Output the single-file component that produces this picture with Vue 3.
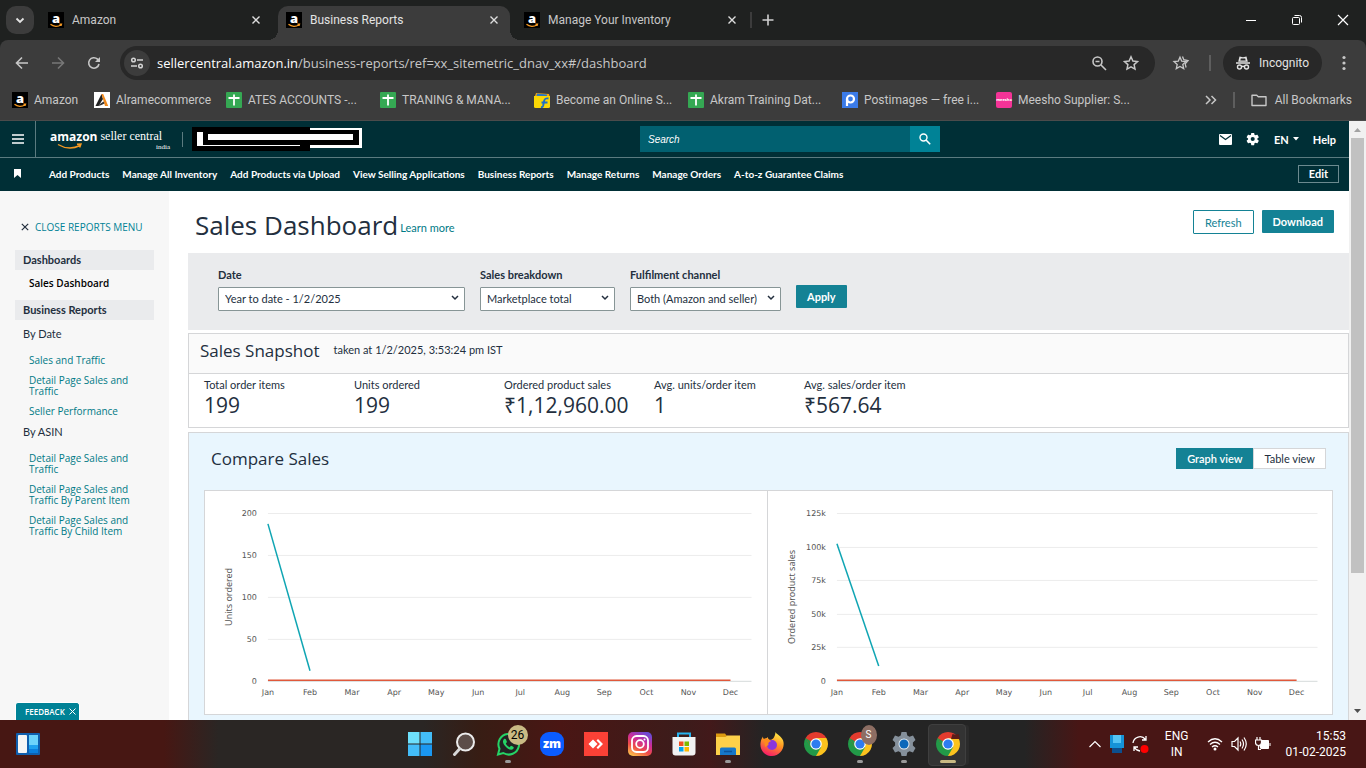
<template>
  <div class="screen">
    <svg class="defs" aria-hidden="true">
      <symbol id="sheet" viewBox="0 0 16 16">
        <rect width="16" height="16" rx="1" fill="#35a853" />
        <path d="M8 2.500v11M2.500 6h11" stroke="#fff" stroke-width="1.800" />
      </symbol>
      <symbol id="arame" viewBox="0 0 16 16">
        <rect width="16" height="16" fill="#fff" />
        <path d="M7.500 2 1.500 14h3L9 7z" fill="#222" />
        <path d="M7.500 2h1.700l5 12h-3.200z" fill="#f28a1c" />
        <path d="M4.500 13l5-3.500 1 2-3 1.500-3 1z" fill="#333" />
      </symbol>
      <symbol id="flipkart" viewBox="0 0 16 16">
        <path d="M0 4h16v10.500a1.500 1.500 0 0 1-1.500 1.500h-13A1.500 1.500 0 0 1 0 14.500z" fill="#fbd705" />
        <path d="M1 4l1-3 13 1 .5 2z" fill="#f5a70b" />
        <path d="M3 1.500l10 1v1.500H2.500z" fill="#2b78c4" />
        <path d="M14.500 6.500c-3-.5-4 .3-4.500 3l-.8 4c-.3 1.300-.8 1.800-2.200 1.600M7.500 10.500h6" fill="none" stroke="#1e6fc7" stroke-width="1.900" />
      </symbol>
      <symbol id="postimg" viewBox="0 0 16 16">
        <rect width="16" height="16" fill="#3b7be8" />
        <circle cx="8.500" cy="7" r="3.500" fill="none" stroke="#fff" stroke-width="2.200" />
        <path d="M5 7v7" stroke="#fff" stroke-width="2.200" />
      </symbol>
      <symbol id="chrome" viewBox="0 0 24 24">
        <path d="M12 12 1.610 6A12 12 0 0 1 22.390 6z" fill="#e33b2e" />
        <path d="M12 12 22.390 6A12 12 0 0 1 12 24z" fill="#fcc31e" />
        <path d="M12 12v12A12 12 0 0 1 1.610 6z" fill="#229a48" />
        <path d="M12 6h10.390L17.200 15z" fill="#fcc31e" />
        <path d="M17.200 15 12 24 6.800 15z" fill="#229a48" />
        <path d="M6.800 15 1.610 6H12z" fill="#e33b2e" />
        <path d="M1.610 6 6.800 15 8 10z" fill="#229a48" />
        <circle cx="12" cy="12" r="5.800" fill="#fff" />
        <circle cx="12" cy="12" r="4.600" fill="#2d7cf0" />
      </symbol>
      <symbol id="smile" viewBox="0 0 16 5">
        <path d="M2.500 1.300c3 2.600 7.500 2.700 10.500.4M11.500 1.200l2-.1-.5 1.800" fill="none" stroke="#f59a23" stroke-width="1.300" />
      </symbol>
    </svg>

    <header class="browser">
      <div class="tab-strip">
        <button class="tab-search" aria-label="Search tabs">
          <svg width="12" height="12" viewBox="0 0 12 12"><path d="M2.500 4.500 6 8l3.500-3.500" fill="none" stroke="#e3e3e3" stroke-width="1.800" /></svg>
        </button>
        <div v-for="tab in tabs" :key="tab.title" class="tab" :class="{ active: tab.active }">
          <span class="fav amazon">a<svg width="16" height="5"><use href="#smile" /></svg></span>
          <span class="tab-title">{{ tab.title }}</span>
          <button class="tab-close" :aria-label="'Close ' + tab.title">
            <svg width="10" height="10" viewBox="0 0 10 10"><path d="M1.500 1.500l7 7M8.500 1.500l-7 7" stroke="#dedede" stroke-width="1.400" /></svg>
          </button>
        </div>
        <span class="tab-line"></span>
        <button class="new-tab" aria-label="New tab">
          <svg width="12" height="12" viewBox="0 0 12 12"><path d="M6 .5v11M.5 6h11" stroke="#d0d0d0" stroke-width="1.600" /></svg>
        </button>
        <div class="window-buttons">
          <button aria-label="Minimize"><svg width="12" height="12" viewBox="0 0 12 12"><path d="M1 6.500h10" stroke="#fff" /></svg></button>
          <button aria-label="Restore"><svg width="12" height="12" viewBox="0 0 12 12" fill="none" stroke="#fff"><rect x="1.500" y="3.500" width="7" height="7" rx="1" /><path d="M3.500 1.500h5a2 2 0 0 1 2 2v5" /></svg></button>
          <button aria-label="Close"><svg width="12" height="12" viewBox="0 0 12 12"><path d="M1 1l10 10M11 1 1 11" stroke="#fff" stroke-width="1.200" /></svg></button>
        </div>
      </div>

      <div class="toolbar">
        <button class="tool" aria-label="Back"><svg width="14" height="14" viewBox="0 0 14 14"><path d="M13 7H2M7 1.500 1.500 7 7 12.500" fill="none" stroke="#c7c7c7" stroke-width="1.600" /></svg></button>
        <button class="tool" aria-label="Forward"><svg width="14" height="14" viewBox="0 0 14 14"><path d="M1 7h11M7 1.500 12.500 7 7 12.500" fill="none" stroke="#777" stroke-width="1.600" /></svg></button>
        <button class="tool" aria-label="Reload"><svg width="14" height="14" viewBox="0 0 14 14"><path d="M12 8a5.200 5.200 0 1 1-1.500-4.800L12.500 5" fill="none" stroke="#c7c7c7" stroke-width="1.600" /><path d="M13 1v5H8z" fill="#c7c7c7" /></svg></button>
        <div class="address">
          <span class="site-info">
            <svg width="14" height="14" viewBox="0 0 14 14" fill="none" stroke="#d4d4d4" stroke-width="1.500"><circle cx="3.500" cy="4" r="1.800" /><path d="M7 4h6M1 10h6" /><circle cx="10.500" cy="10" r="1.800" /></svg>
          </span>
          <span class="url"><b>sellercentral.amazon.in</b>/business-reports/ref=xx_sitemetric_dnav_xx#/dashboard</span>
          <svg width="16" height="16" viewBox="0 0 16 16" fill="none" stroke="#c7c7c7" stroke-width="1.600"><circle cx="6.500" cy="6.500" r="4.500" /><path d="M10 10l5 5M4.500 6.500h4" /></svg>
          <svg width="16" height="16" viewBox="0 0 16 16" fill="none" stroke="#c7c7c7" stroke-width="1.500"><path d="M8 1.800l1.900 4.200 4.600.5-3.400 3.100.9 4.500L8 11.800l-4 2.300.9-4.500L1.500 6.500 6.100 6z" /></svg>
        </div>
        <svg class="star" width="18" height="16" viewBox="0 0 18 16" fill="none" stroke="#c7c7c7" stroke-width="1.300"><path d="M8 2.200l1.700 3.900 4.300.4-3.200 2.900.9 4.200L8 11.400l-3.700 2.200.9-4.200L2 6.500l4.300-.4z" /><path d="M10.500 1.500l1.300 3.200 4.200.9-2.800 3.200.9 3.700" /></svg>
        <span class="tool-line"></span>
        <div class="incognito">
          <svg width="16" height="16" viewBox="0 0 16 16"><path d="M4.500 1.500 8 2.200l3.500-.7 1.300 5.300H3.200z" fill="#e3e3e3" /><path d="M5.800 3.500h4.400l.5 2H5.300z" fill="#282828" /><path d="M1 8h14" stroke="#e3e3e3" stroke-width="1.500" /><g fill="none" stroke="#e3e3e3" stroke-width="1.400"><circle cx="4.500" cy="12" r="2" /><circle cx="11.500" cy="12" r="2" /><path d="M6.500 11.600q1.500-.8 3 0" /></g></svg>
          <span>Incognito</span>
        </div>
        <button class="tool dots" aria-label="Menu"><svg width="4" height="16" viewBox="0 0 4 16" fill="#c7c7c7"><circle cx="2" cy="2.500" r="1.600" /><circle cx="2" cy="8" r="1.600" /><circle cx="2" cy="13.500" r="1.600" /></svg></button>
      </div>

      <div class="bookmarks">
        <a v-for="mark in bookmarks" :key="mark.text" href="#" class="mark" :class="mark.size">
          <span v-if="mark.icon === 'amazon'" class="fav amazon">a<svg width="16" height="5"><use href="#smile" /></svg></span>
          <span v-else-if="mark.icon === 'meesho'" class="fav meesho">meesho</span>
          <svg v-else width="16" height="16"><use :href="'#' + mark.icon" /></svg>
          <span>{{ mark.text }}</span>
        </a>
        <svg class="more" width="12" height="10" viewBox="0 0 12 10"><path d="M1 1l4 4-4 4M6.500 1l4 4-4 4" fill="none" stroke="#c7c7c7" stroke-width="1.500" /></svg>
        <span class="mark-line"></span>
        <svg width="16" height="14" viewBox="0 0 16 14"><path d="M1 2.200h4.700l1.600 1.600H15v8.700H1z" fill="none" stroke="#c7c7c7" stroke-width="1.400" stroke-linejoin="round" /></svg>
        <a href="#" class="all-marks">All Bookmarks</a>
      </div>
    </header>

    <div class="viewport">
      <div class="page">
        <div class="topbar">
          <button class="burger" aria-label="Menu"><svg width="12" height="10" viewBox="0 0 12 10"><path d="M0 1h12M0 5h12M0 9h12" stroke="#fff" stroke-width="1.400" /></svg></button>
          <a href="#" class="logo">
            <span class="logo-amazon">amazon
              <svg width="26" height="7" viewBox="0 0 26 7"><path d="M1 1.500q11 6.500 22 1M20 1.300l4-.3-1.300 3.400" fill="none" stroke="#f59a23" stroke-width="1.400" /></svg>
            </span>
            <span class="logo-seller">seller central<small>india</small></span>
          </a>
          <span class="top-line"></span>
          <svg class="account" width="170" height="24" viewBox="0 0 170 24">
            <path d="M0 0h118v24H0z" fill="#000" />
            <path d="M118 1h52v20h-52z" fill="#fff" />
            <path d="M5 5h7v14H5z" fill="#fff" />
            <path d="M11 3h156v15H11z" fill="#000" />
            <path d="M16 7h145v6H16zM11 18h97v1H11z" fill="#fff" />
          </svg>
          <form class="search" @submit.prevent>
            <input type="text" v-model="query" placeholder="Search" aria-label="Search" />
            <button aria-label="Search"><svg width="12" height="12" viewBox="0 0 12 12"><circle cx="4.500" cy="4.500" r="3.500" fill="none" stroke="#fff" stroke-width="1.400" /><path d="M7 7l4.200 4.200" stroke="#fff" stroke-width="1.600" /></svg></button>
          </form>
          <div class="top-links">
            <svg width="13" height="11" viewBox="0 0 13 11"><rect width="13" height="11" rx="1" fill="#fff" /><path d="M1 1.500l5.500 4 5.500-4" fill="none" stroke="#002f36" stroke-width="1.200" /></svg>
            <svg width="14" height="14" viewBox="0 0 24 24"><path fill="#fff" d="M19.400 13c0-.3.100-.6.100-1s0-.7-.1-1l2.300-1.700c.2-.2.300-.5.100-.7l-2.200-3.800c-.1-.2-.4-.3-.7-.2l-2.600 1.100c-.6-.4-1.200-.8-1.800-1L14.100 2c0-.3-.3-.5-.5-.5H9.400c-.3 0-.5.200-.5.500l-.4 2.700c-.6.300-1.200.6-1.800 1L4.100 4.600c-.3-.1-.6 0-.7.200L1.200 8.600c-.1.200-.1.500.1.700L3.600 11c0 .3-.1.700-.1 1s0 .7.100 1l-2.300 1.700c-.2.200-.3.500-.1.700l2.200 3.800c.1.200.4.300.7.200l2.600-1.100c.6.400 1.200.8 1.800 1l.4 2.700c0 .3.200.5.500.5h4.200c.3 0 .5-.2.500-.5l.4-2.700c.6-.3 1.200-.6 1.800-1l2.600 1.100c.3.100.6 0 .7-.2l2.200-3.800c.1-.2.100-.5-.1-.7zM11.500 15.500a3.500 3.500 0 1 1 0-7 3.500 3.500 0 0 1 0 7z" /></svg>
            <button class="lang">EN <svg width="6" height="4" viewBox="0 0 6 4"><path d="M0 0h6L3 3.500z" fill="#fff" /></svg></button>
            <a href="#">Help</a>
          </div>
        </div>

        <nav class="nav">
          <svg class="flag" width="7" height="9" viewBox="0 0 7 9"><path d="M0 0h7v9L3.500 6 0 9z" fill="#fff" /></svg>
          <a v-for="item in navItems" :key="item" href="#">{{ item }}</a>
          <button class="edit">Edit</button>
        </nav>

        <div class="body">
          <aside class="sidebar">
            <button class="close-menu">
              <svg width="8" height="8" viewBox="0 0 8 8"><path d="M.8.8l6.400 6.400M7.200.8.8 7.200" stroke="#232f3e" stroke-width="1.200" /></svg>
              CLOSE REPORTS MENU
            </button>
            <h4 class="group">Dashboards</h4>
            <a href="#" class="current">Sales Dashboard</a>
            <h4 class="group">Business Reports</h4>
            <div v-for="section in reports" :key="section.title">
              <h5 class="sub">{{ section.title }}</h5>
              <ul class="links">
                <li v-for="link in section.links" :key="link"><a href="#">{{ link }}</a></li>
              </ul>
            </div>
          </aside>

          <main class="main">
            <div class="title-row">
              <h1>Sales Dashboard</h1>
              <a href="#" class="learn">Learn more</a>
              <button class="btn outline">Refresh</button>
              <button class="btn download">Download</button>
            </div>

            <div class="filters">
              <div v-for="filter in filters" :key="filter.id" class="field" :class="filter.id">
                <label :for="filter.id">{{ filter.label }}</label>
                <div class="select">
                  <select :id="filter.id" v-model="filter.value">
                    <option>{{ filter.value }}</option>
                  </select>
                  <svg width="8" height="6" viewBox="0 0 8 6"><path d="M1 1l3 3 3-3" fill="none" stroke="#232f3e" stroke-width="1.500" /></svg>
                </div>
              </div>
              <button class="btn apply">Apply</button>
            </div>

            <section class="snapshot">
              <div class="snapshot-head">
                <h2>Sales Snapshot</h2>
                <span>taken at 1/2/2025, 3:53:24 pm IST</span>
              </div>
              <div class="stats">
                <div v-for="stat in stats" :key="stat.label" class="stat">
                  <div class="stat-label">{{ stat.label }}</div>
                  <div class="stat-value">{{ stat.value }}</div>
                </div>
              </div>
            </section>

            <section class="compare">
              <div class="compare-head">
                <h2>Compare Sales</h2>
                <button class="view" :class="{ on: view === 'graph' }" @click="view = 'graph'">Graph view</button>
                <button class="view" :class="{ on: view === 'table' }" @click="view = 'table'">Table view</button>
              </div>
              <div class="charts">
                <div v-for="chart in charts" :key="chart.label" class="chart" :style="{ flexGrow: chart.width }">
                  <svg :viewBox="`0 0 ${chart.width} 223`">
                    <g v-for="(tick, i) in chart.ticks" :key="tick">
                      <line :x1="chart.left" :x2="chart.right" :y1="tickY(chart, i)" :y2="tickY(chart, i)" :stroke="i === chart.ticks.length - 1 ? '#d5dbdb' : '#ececec'" />
                      <text :x="chart.left - 11" :y="tickY(chart, i) + 3" text-anchor="end">{{ tick }}</text>
                    </g>
                    <text v-for="(month, i) in months" :key="month" :x="monthX(chart, i)" y="204" text-anchor="middle">{{ month }}</text>
                    <text class="axis" :transform="`translate(${chart.labelX} 106) rotate(-90)`" text-anchor="middle">{{ chart.label }}</text>
                    <line :x1="chart.left" :x2="monthX(chart, 11)" y1="189.500" y2="189.500" stroke="#e0583b" stroke-width="1.500" />
                    <line :x1="monthX(chart, 0)" :y1="valueY(chart, 0)" :x2="monthX(chart, 1)" :y2="valueY(chart, 1)" stroke="#0fa5b3" stroke-width="1.500" />
                  </svg>
                </div>
              </div>
            </section>
          </main>
        </div>
        <button class="feedback">FEEDBACK <svg width="7" height="7" viewBox="0 0 7 7"><path d="M.5.5l6 6M6.500.5l-6 6" stroke="#fff" /></svg></button>
      </div>

      <div class="scrollbar">
        <svg width="7" height="4" viewBox="0 0 7 4"><path d="M0 4h7L3.500 0z" fill="#a3a3a3" /></svg>
        <div class="track"><div class="thumb"></div></div>
        <svg width="7" height="4" viewBox="0 0 7 4"><path d="M0 0h7L3.500 4z" fill="#505050" /></svg>
      </div>
    </div>

    <footer class="taskbar">
      <div class="task-left">
        <svg width="24" height="24" viewBox="0 0 24 24"><rect y="1" width="24" height="22" rx="1" fill="#0f5fae" /><rect x="2" y="3" width="9" height="18" rx="1" fill="#f5f5f5" /><path d="M13 3h9v10h-9z" fill="#6cd3fb" /><path d="M13 13h9v4h-9z" fill="#1ea1ef" /><path d="M13 17h9v4h-9z" fill="#0a7fdd" /></svg>
      </div>
      <div class="task-apps">
        <button class="app" aria-label="Start">
          <svg width="24" height="24" viewBox="0 0 24 24"><path d="M0 0h11.500v11.500H0z" fill="#6ee0fb" /><path d="M12.500 0H24v11.500H12.500zM0 12.500h11.500V24H0z" fill="#43bdf8" /><path d="M12.500 12.500H24V24H12.500z" fill="#1a98f2" /></svg>
        </button>
        <button class="app" aria-label="Search">
          <svg width="24" height="24" viewBox="0 0 24 24"><circle cx="13.500" cy="10" r="8.500" fill="#5c4d48" stroke="#ececec" stroke-width="2" /><path d="M7.500 17l-5 5.500" stroke="#d8d8d8" stroke-width="3" stroke-linecap="round" /></svg>
        </button>
        <button class="app" aria-label="WhatsApp">
          <svg width="24" height="24" viewBox="0 0 24 24"><path d="M2 22.500l1.500-5.700A10.300 10.300 0 1 1 7.300 21z" fill="#222" stroke="#25d366" stroke-width="2" /><path d="M8 7c-2 2-1 5 2 8s6 3.500 7.500 1.500c.7-1 .2-1.500-2.500-2.700l-1.500 1.500c-1.500-.6-2.900-2-3.700-3.700L11 10C10 7 9.500 6 8 7z" fill="#25d366" /></svg>
          <span class="count">26</span><i></i>
        </button>
        <button class="app" aria-label="Zoom">
          <svg width="24" height="24" viewBox="0 0 24 24"><rect width="24" height="24" rx="9" fill="#0b5cff" /><text x="12" y="16" text-anchor="middle" font-family="Open Sans, sans-serif" font-weight="800" font-size="12" fill="#fff">zm</text></svg>
        </button>
        <button class="app" aria-label="AnyDesk">
          <svg width="24" height="24" viewBox="0 0 24 24"><rect width="24" height="24" fill="#fb4136" /><path d="M9 7.500 13.500 12 9 16.500 4.500 12z" fill="#fff" /><path d="M12.500 8.500l1.500-1.500 5 5-5 5-1.500-1.500L16 12z" fill="#fff" /></svg>
        </button>
        <button class="app" aria-label="Instagram">
          <svg width="24" height="24" viewBox="0 0 24 24">
            <defs><linearGradient id="insta" x1="0.200" y1="1" x2="0.700" y2="0"><stop offset="0" stop-color="#fdc04b" /><stop offset="0.350" stop-color="#ee4a48" /><stop offset="0.650" stop-color="#cb2c9c" /><stop offset="1" stop-color="#6a4bd6" /></linearGradient></defs>
            <rect width="24" height="24" rx="5" fill="url(#insta)" /><g fill="none" stroke="#fff" stroke-width="1.800"><rect x="4" y="4" width="16" height="16" rx="4.500" /><circle cx="12" cy="12" r="3.800" /></g><circle cx="16.500" cy="7.500" r="1" fill="#fff" />
          </svg>
        </button>
        <button class="app" aria-label="Store">
          <svg width="24" height="24" viewBox="0 0 24 24"><path d="M6 6V1.500h12V6" fill="none" stroke="#27b3ef" stroke-width="2" /><path d="M.5 5h23v15.500a3 3 0 0 1-3 3h-17a3 3 0 0 1-3-3z" fill="#f2f2f2" /><path d="M7 9.500h4.500V14H7z" fill="#f25022" /><path d="M12.500 9.500H17V14h-4.500z" fill="#7fba00" /><path d="M7 15h4.500v4.500H7z" fill="#00a4ef" /><path d="M12.500 15H17v4.500h-4.500z" fill="#ffb900" /></svg>
        </button>
        <button class="app" aria-label="Files">
          <svg width="24" height="24" viewBox="0 0 24 24"><path d="M0 1.500h9l2 2.500-2 3H0z" fill="#dd9a10" /><path d="M0 5h9.500L11 3.500h13V23H0z" fill="#fdd04a" /><path d="M4 23v-6a1.500 1.500 0 0 1 1.500-1.500h13A1.500 1.500 0 0 1 20 17v6z" fill="#1677c9" /><path d="M8 19.500h8" stroke="#0c539b" stroke-width="1.500" /></svg><i></i>
        </button>
        <button class="app" aria-label="Firefox">
          <svg width="24" height="24" viewBox="0 0 24 24">
            <defs><linearGradient id="fox" x1="0.700" y1="0" x2="0.300" y2="1"><stop offset="0" stop-color="#fff04a" /><stop offset="0.450" stop-color="#ff9520" /><stop offset="1" stop-color="#f5156c" /></linearGradient></defs>
            <path d="M15.500 0c1 2.500 6 4 7.600 8.500C25.500 16 20 24 12 24S-1 17 .8 9.500C1.200 7.500 2 6 3 4.500c0 1.500.3 2 1 2.500C5.500 6 7 6.500 8 5c-.2 1.700.6 2.300 1.800 2.700C12 8.200 15 6 15.500 0z" fill="url(#fox)" /><circle cx="12" cy="13" r="5" fill="#8a35dc" /><path d="M4 7c3-1 5.500.5 7 2.500-2 .2-3.200 1.500-2.500 3.500L5 15z" fill="#ff8a1c" />
          </svg>
        </button>
        <button class="app" aria-label="Chrome"><svg width="24" height="24"><use href="#chrome" /></svg></button>
        <button class="app" aria-label="Chrome profile">
          <svg width="24" height="24"><use href="#chrome" /></svg><span class="profile">S</span><i></i>
        </button>
        <button class="app" aria-label="Settings">
          <svg width="24" height="24" viewBox="0 0 24 24"><path d="M9.500 0h5l.8 3.600 2.200 1.200 3.500-1.200L23.500 8l-2.600 2.600v2.800L23.500 16 21 20.400l-3.500-1.200-2.200 1.200-.8 3.600h-5l-.8-3.600-2.200-1.200L3 20.400.5 16l2.600-2.600v-2.800L.5 8 3 3.600l3.500 1.200 2.200-1.200z" fill="#85909b" /><circle cx="12" cy="12" r="5.500" fill="#e2ebf2" /><circle cx="12" cy="12" r="4.500" fill="#0c68ba" /></svg><i></i>
        </button>
        <button class="app open" aria-label="Chrome incognito">
          <svg width="24" height="24" viewBox="0 0 24 24"><use href="#chrome" /><path d="M15 7l1.500-5 3 .8 3-.8L24 7z" fill="#5a1d18" /></svg>
          <i></i>
        </button>
      </div>
      <div class="tray">
        <svg width="14" height="8" viewBox="0 0 14 8"><path d="M1.500 7 7 1.500 12.500 7" fill="none" stroke="#fff" stroke-width="1.200" /></svg>
        <svg width="14" height="18" viewBox="0 0 14 18"><path d="M0 0h14v13H0z" fill="#1593d8" /><path d="M3 0h8v8H3z" fill="#54c4f4" /><path d="M2 13h10v5H2z" fill="#0c4f8e" /></svg>
        <svg width="17" height="18" viewBox="0 0 17 18"><path d="M1 8a7 7 0 0 1 12.500-3.500M14 1v4h-4M2 16v-4h4M2.500 12.500A7 7 0 0 0 8 16" fill="none" stroke="#fff" stroke-width="1.300" /><circle cx="12.500" cy="14" r="4" fill="#f00" /></svg>
        <div class="input-lang">ENG<br />IN</div>
        <svg width="16" height="14" viewBox="0 0 16 14"><g fill="none" stroke="#fff" stroke-width="1.300"><path d="M1 5q7-6.500 14 0M3 7.500q5-4.500 10 0M5 10q3-2.600 6 0" /></g><circle cx="8" cy="12" r="1.500" fill="#fff" /></svg>
        <svg width="16" height="16" viewBox="0 0 16 16" fill="none" stroke="#fff" stroke-width="1.200"><path d="M1 5.500h2.500L7 2v12l-3.500-3.500H1zM9 5.500q1.500 2.500 0 5M11 3.500q3 4.500 0 9M13 1.500q4.500 6.500 0 13" /></svg>
        <svg width="16" height="14" viewBox="0 0 16 14"><path d="M5 3.500h8.500v8H5z" fill="#fff" stroke="#fff" /><path d="M14.500 6h1v3h-1z" fill="#fff" /><path d="M2 0v3M5 0v3M.5 3h6v2.500a3 3 0 0 1-6 0zM3.500 8v4.500H6" fill="#451716" stroke="#fff" stroke-width="1.200" /></svg>
        <div class="clock">15:53<br />01-02-2025</div>
      </div>
    </footer>
  </div>
</template>

<script setup>
import { ref } from "vue"

const query = ref('')
const view = ref('graph')

const tabs = [
  { title: 'Amazon' },
  { title: 'Business Reports', active: true },
  { title: 'Manage Your Inventory' }
]

const bookmarks = [
  { icon: 'amazon', text: 'Amazon', size: 'short' },
  { icon: 'arame', text: 'Alramecommerce', size: 'medium' },
  { icon: 'sheet', text: 'ATES ACCOUNTS -...' },
  { icon: 'sheet', text: 'TRANING & MANA...' },
  { icon: 'flipkart', text: 'Become an Online S...' },
  { icon: 'sheet', text: 'Akram Training Dat...' },
  { icon: 'postimg', text: 'Postimages — free i...' },
  { icon: 'meesho', text: 'Meesho Supplier: S...' }
]

const navItems = [
  'Add Products',
  'Manage All Inventory',
  'Add Products via Upload',
  'View Selling Applications',
  'Business Reports',
  'Manage Returns',
  'Manage Orders',
  'A-to-z Guarantee Claims'
]

const reports = [
  {
    title: 'By Date',
    links: ['Sales and Traffic', 'Detail Page Sales and Traffic', 'Seller Performance']
  },
  {
    title: 'By ASIN',
    links: [
      'Detail Page Sales and Traffic',
      'Detail Page Sales and Traffic By Parent Item',
      'Detail Page Sales and Traffic By Child Item'
    ]
  }
]

const filters = ref([
  { id: 'date', label: 'Date', value: 'Year to date - 1/2/2025' },
  { id: 'breakdown', label: 'Sales breakdown', value: 'Marketplace total' },
  { id: 'channel', label: 'Fulfilment channel', value: 'Both (Amazon and seller)' }
])

const stats = [
  { label: 'Total order items', value: '199' },
  { label: 'Units ordered', value: '199' },
  { label: 'Ordered product sales', value: '₹1,12,960.00' },
  { label: 'Avg. units/order item', value: '1' },
  { label: 'Avg. sales/order item', value: '₹567.64' }
]

const months = ['Jan', 'Feb', 'Mar', 'Apr', 'May', 'Jun', 'Jul', 'Aug', 'Sep', 'Oct', 'Nov', 'Dec']

const charts = [
  {
    label: 'Units ordered',
    ticks: ['200', '150', '100', '50', '0'],
    values: [187, 12],
    max: 200,
    width: 562,
    left: 63,
    right: 547,
    labelX: 27
  },
  {
    label: 'Ordered product sales',
    ticks: ['125k', '100k', '75k', '50k', '25k', '0'],
    values: [102000, 10960],
    max: 125000,
    width: 565,
    left: 69,
    right: 550,
    labelX: 27
  }
]

const plotTop = 22
const plotHeight = 168

const tickY = (chart, i) => Math.round(plotTop + (plotHeight * i) / (chart.ticks.length - 1)) + 0.5
const monthX = (chart, i) => chart.left + ((chart.right - chart.left) / 11.5) * i
const valueY = (chart, i) => plotTop + plotHeight * (1 - chart.values[i] / chart.max)
</script>

<style>
body {
  margin: 0;
  overflow: hidden;
}
</style>

<style scoped>
* {
  box-sizing: border-box;
}

.screen {
  display: flex;
  flex-direction: column;
  height: 100vh;
  font-family: Lato, "Open Sans", sans-serif;
  color: #232f3e;
}

.defs {
  position: absolute;
  width: 0;
  height: 0;
}

svg {
  display: block;
  flex-shrink: 0;
}

button {
  border: none;
  background: none;
  padding: 0;
  font-family: inherit;
  color: inherit;
  cursor: pointer;
}

a {
  color: inherit;
  text-decoration: none;
}

h1, h2, h4, h5, ul {
  margin: 0;
  padding: 0;
  list-style: none;
  font-weight: 400;
}

.browser {
  font-family: Roboto, "Open Sans", sans-serif;
  font-size: 12px;
  color: #c7c7c7;
  background-color: #1f2120;
}

.fav {
  position: relative;
  flex-shrink: 0;
  width: 16px;
  height: 16px;
  font-family: "Open Sans", sans-serif;
  text-align: center;
  color: #fff;
}

.fav.amazon {
  background-color: #000;
  font-size: 13px;
  line-height: 13px;
  font-weight: 800;
}

.fav.amazon svg {
  position: absolute;
  left: 0;
  bottom: 0;
}

.fav.meesho {
  border-radius: 2px;
  background-color: #f43397;
  font-size: 4px;
  line-height: 16px;
  font-weight: 700;
}

.tab-strip {
  display: flex;
  align-items: center;
  height: 40px;
  padding-left: 6px;
}

.tab-search {
  display: flex;
  align-items: center;
  justify-content: center;
  width: 28px;
  height: 28px;
  border-radius: 10px;
  background-color: #3c3c3c;
}

.tab {
  position: relative;
  display: flex;
  align-items: center;
  gap: 8px;
  width: 232px;
  height: 34px;
  margin: 6px 0 0 6px;
  padding: 0 8px 6px;
}

.tab.active {
  background-color: #3c3c3c;
  border-radius: 10px 10px 0 0;
  color: #e3e3e3;
}

.tab.active::before,
.tab.active::after {
  content: '';
  position: absolute;
  bottom: 0;
  width: 10px;
  height: 10px;
}

.tab.active::before {
  right: 100%;
  background: radial-gradient(circle at 0 0, transparent 10px, #3c3c3c 10px);
}

.tab.active::after {
  left: 100%;
  background: radial-gradient(circle at 100% 0, transparent 10px, #3c3c3c 10px);
}

.tab-title {
  flex: 1;
}

.tab-close {
  display: flex;
  justify-content: center;
  width: 16px;
}

.tab-line {
  width: 2px;
  height: 16px;
  margin-left: 2px;
  background-color: #3c3c3c;
}

.new-tab {
  display: flex;
  margin-left: 10px;
}

.window-buttons {
  display: flex;
  margin-left: auto;
}

.window-buttons button {
  display: flex;
  justify-content: center;
  width: 46px;
}

.toolbar {
  display: flex;
  align-items: center;
  height: 46px;
  padding: 0 4px;
  background-color: #3c3c3c;
  border-radius: 8px 8px 0 0;
}

.tool {
  display: flex;
  justify-content: center;
  width: 36px;
}

.address {
  flex: 1;
  display: flex;
  align-items: center;
  gap: 16px;
  height: 34px;
  margin-left: 8px;
  padding: 0 16px 0 4px;
  border-radius: 17px;
  background-color: #282828;
  font-family: "Open Sans", sans-serif;
  font-size: 13px;
}

.site-info {
  display: flex;
  align-items: center;
  justify-content: center;
  width: 26px;
  height: 26px;
  margin-right: -9px;
  border-radius: 50%;
  background-color: #3c3c3c;
}

.url {
  flex: 1;
}

.url b {
  font-weight: 400;
  color: #fff;
}

.star {
  margin-left: 17px;
}

.tool-line,
.mark-line {
  width: 2px;
  height: 16px;
  background-color: #5e5e5e;
}

.tool-line {
  margin: 0 12px 0 19px;
}

.incognito {
  display: flex;
  align-items: center;
  gap: 8px;
  height: 34px;
  padding: 0 13px 0 12px;
  border-radius: 17px;
  background-color: #282828;
  color: #e3e3e3;
}

.dots {
  margin-left: 4px;
}

.bookmarks {
  display: flex;
  align-items: center;
  height: 35px;
  padding: 0 14px 6px 12px;
  background-color: #3c3c3c;
  border-bottom: 1px solid #4b4b4b;
}

.mark {
  display: flex;
  align-items: center;
  gap: 6px;
  width: 154px;
  white-space: nowrap;
}

.mark.short {
  width: 82px;
}

.mark.medium {
  width: 132px;
}

.more {
  margin-left: auto;
}

.mark-line {
  margin: 0 16px;
}

.all-marks {
  margin-left: 8px;
}

.viewport {
  flex: 1;
  display: flex;
  min-height: 0;
}

.page {
  flex: 1;
  position: relative;
  display: flex;
  flex-direction: column;
  min-width: 0;
  overflow: hidden;
  background-color: #fff;
}

.topbar {
  display: flex;
  align-items: center;
  flex-shrink: 0;
  height: 37px;
  padding-right: 13px;
  background-color: #002f36;
  border-bottom: 1px solid #5b7b80;
  color: #fff;
}

.burger {
  display: flex;
  align-items: center;
  justify-content: center;
  width: 36px;
  height: 36px;
  border-right: 1px solid #5b7b80;
}

.logo {
  display: flex;
  width: 132px;
  margin-left: 14px;
  gap: 3px;
}

.logo-amazon {
  position: relative;
  font-family: "Open Sans", sans-serif;
  font-size: 12px;
  line-height: 18px;
  font-weight: 700;
}

.logo-amazon svg {
  position: absolute;
  left: 7px;
  top: 15px;
}

.logo-seller {
  display: flex;
  flex-direction: column;
  font-family: "Liberation Serif", serif;
  font-size: 12px;
  line-height: 16px;
  white-space: nowrap;
}

.logo-seller small {
  margin-right: -8px;
  font-size: 7px;
  line-height: 7px;
  text-align: right;
}

.top-line {
  width: 1px;
  height: 15px;
  margin-right: 9px;
  background-color: #5b7b80;
}

.search {
  display: flex;
  width: 300px;
  height: 26px;
  margin-left: auto;
}

.search input {
  flex: 1;
  min-width: 0;
  padding: 0 8px;
  border: none;
  background-color: #016070;
  color: #fff;
  font-family: "Liberation Sans", sans-serif;
  font-size: 10px;
  font-style: italic;
}

.search input::placeholder {
  color: #fff;
  opacity: 1;
}

.search button {
  display: flex;
  align-items: center;
  justify-content: center;
  width: 30px;
  background-color: #008296;
}

.top-links {
  display: flex;
  align-items: center;
  justify-content: flex-end;
  gap: 14px;
  width: 396px;
  font-size: 11px;
  font-weight: 700;
}

.lang {
  display: flex;
  align-items: center;
  gap: 4px;
  font-size: 11px;
  font-weight: 700;
}

.nav {
  display: flex;
  align-items: center;
  flex-shrink: 0;
  gap: 13px;
  height: 33px;
  padding: 0 10px 2px 14px;
  background-color: #002f36;
  color: #fff;
  font-size: 10px;
  font-weight: 700;
  white-space: nowrap;
}

.flag {
  margin-right: 15px;
}

.edit {
  width: 41px;
  height: 18px;
  margin-left: auto;
  border: 1px solid #6c8a8f;
  font-size: 11px;
  font-weight: 700;
}

.body {
  flex: 1;
  display: flex;
  min-height: 0;
}

.sidebar {
  flex-shrink: 0;
  width: 169px;
  padding: 28px 15px 0;
  background-color: #f7f7f7;
  font-family: "Open Sans", sans-serif;
  font-size: 10px;
}

.close-menu {
  display: flex;
  align-items: center;
  gap: 6px;
  height: 16px;
  margin: 0 0 15px 6px;
  color: #008296;
  font-size: 10px;
  white-space: nowrap;
}

.group {
  padding-left: 8px;
  background-color: #eaebed;
  line-height: 20px;
  font-family: Lato, sans-serif;
  font-size: 11px;
  font-weight: 700;
}

.current {
  display: block;
  padding-left: 14px;
  line-height: 26px;
  margin-bottom: 4px;
  color: #000;
  font-size: 10px;
  font-weight: 600;
}

.sub {
  padding-left: 8px;
  line-height: 20px;
  font-family: Lato, sans-serif;
  font-size: 11px;
}

.group + div {
  margin-top: 4px;
}

.links {
  padding: 11px 0 5px 14px;
}

.links li {
  line-height: 11px;
  color: #007a86;
}

.links li + li {
  margin-top: 9px;
}

.main {
  flex: 1;
  min-width: 0;
  margin-left: 19px;
  display: flex;
  flex-direction: column;
}

.title-row {
  display: flex;
  align-items: center;
  flex-shrink: 0;
  height: 62px;
  padding: 0 15px 0 7px;
}

h1 {
  margin-top: 6px;
  font-family: "Open Sans", sans-serif;
  font-size: 26px;
  line-height: 36px;
}

.learn {
  margin: 10px auto 0 2px;
  color: #007a86;
  font-size: 11px;
}

.btn {
  height: 23px;
  padding: 0 11px;
  border-radius: 1px;
  background-color: #148295;
  color: #fff;
  font-size: 11px;
  font-weight: 700;
}

.outline {
  height: 24px;
  margin-right: 8px;
  border: 1px solid #148295;
  background-color: #fff;
  color: #148295;
  font-weight: 400;
}

.download {
  margin-bottom: 1px;
}

.filters {
  display: flex;
  gap: 15px;
  flex-shrink: 0;
  height: 77px;
  padding: 14px 30px 0;
  background-color: #eaebed;
}

.field label {
  display: block;
  margin-bottom: 4px;
  font-size: 11px;
  line-height: 16px;
  font-weight: 700;
}

.select {
  position: relative;
}

.select svg {
  position: absolute;
  right: 6px;
  top: 8px;
  pointer-events: none;
}

.select select {
  display: block;
  appearance: none;
  width: 100%;
  height: 24px;
  padding: 0 6px 1px;
  border: 1px solid #879596;
  border-radius: 1px;
  background-color: #fff;
  color: #232f3e;
  font-family: inherit;
  font-size: 11px;
}

.date {
  width: 247px;
}

.breakdown {
  width: 135px;
}

.channel {
  width: 151px;
}

.apply {
  margin-top: 18px;
}

.snapshot {
  flex-shrink: 0;
  margin-top: 3px;
  border: 1px solid #d5d6d8;
}

.snapshot-head {
  display: flex;
  align-items: center;
  gap: 14px;
  height: 40px;
  padding: 0 11px 6px;
  background-color: #fafafa;
  border-bottom: 1px solid #d5d6d8;
}

h2 {
  font-family: "Open Sans", sans-serif;
  font-size: 17px;
  line-height: 24px;
}

.snapshot-head span {
  padding-bottom: 3px;
  font-size: 11px;
}

.stats {
  display: flex;
  height: 53px;
  padding: 4px 15px 0;
}

.stat {
  width: 150px;
  white-space: nowrap;
}

.stat-label {
  font-size: 11px;
  line-height: 14px;
}

.stat-value {
  font-family: "Open Sans", "Noto Sans", sans-serif;
  font-size: 21px;
  line-height: 26px;
}

.compare {
  flex: 1;
  margin-top: 4px;
  padding: 15px;
  border: 1px solid #d5d6d8;
  border-bottom: none;
  background-color: #e9f6fe;
}

.compare-head {
  display: flex;
  align-items: center;
  height: 21px;
  margin-bottom: 21px;
  padding: 0 7px;
}

.compare-head h2 {
  margin-right: auto;
}

.view {
  height: 21px;
  padding: 0 10px;
  border: 1px solid #d5d6d8;
  background-color: #fff;
  font-size: 11px;
}

.view.on {
  border-color: #148295;
  background-color: #148295;
  color: #fff;
  font-weight: 600;
}

.charts {
  display: flex;
  border: 1px solid #d5d6d8;
  background-color: #fff;
}

.chart {
  flex: 1;
  min-width: 0;
}

.chart + .chart {
  border-left: 1px solid #d5d6d8;
}

.chart text {
  font-family: "DejaVu Sans", sans-serif;
  font-size: 8px;
  fill: #555;
}

.chart .axis {
  font-family: "Noto Sans", sans-serif;
  font-size: 9px;
}

.feedback {
  position: absolute;
  left: 15px;
  bottom: 0;
  display: flex;
  align-items: center;
  gap: 4px;
  height: 18px;
  padding: 0 3px 0 9px;
  border: 1px solid #fff;
  border-bottom: none;
  border-radius: 3px 3px 0 0;
  background-color: #008296;
  color: #fff;
  font-family: "Open Sans", sans-serif;
  font-size: 8px;
  font-weight: 600;
}

.scrollbar {
  display: flex;
  flex-direction: column;
  align-items: center;
  gap: 6px;
  width: 17px;
  padding: 7px 0;
  background-color: #f1f1f1;
}

.track {
  flex: 1;
  width: 13px;
}

.thumb {
  height: 77%;
  background-color: #c1c1c1;
}

.taskbar {
  display: flex;
  align-items: center;
  height: 48px;
  flex-shrink: 0;
  background: linear-gradient(90deg, #471713 0, #471713 12%, #2a2624 16%, #2a2624 31%, #371d14 35%, #4a1614 41%, #3c1c1b 50%, #42191a 52%, #242424 56%, #242424 75%, #481615 79%, #481615 100%);
  color: #fff;
  font-family: Roboto, "Open Sans", sans-serif;
  font-size: 12px;
}

.task-left {
  flex: 1;
  padding-left: 16px;
}

.task-apps {
  display: flex;
  margin-left: 5px;
}

.app {
  position: relative;
  display: flex;
  align-items: center;
  justify-content: center;
  width: 44px;
  height: 48px;
}

.app i {
  position: absolute;
  bottom: 5px;
  width: 6px;
  height: 3px;
  border-radius: 2px;
  background-color: #9a9a9a;
}

.app.open::before {
  content: '';
  position: absolute;
  left: 2px;
  top: 4px;
  width: 36px;
  height: 40px;
  border: 1px solid #3f3f3f;
  border-radius: 4px;
  background-color: #333;
  box-shadow: 4px 0 0 -1px #2b2b2b;
}

.app.open svg {
  position: relative;
}

.app.open i {
  width: 16px;
  background-color: #c9ba84;
}

.count,
.profile {
  position: absolute;
  right: 2px;
  top: 5px;
  width: 20px;
  height: 20px;
  border-radius: 50%;
  background-color: #c9ba84;
  color: #000;
  font-size: 12px;
  line-height: 20px;
  text-align: center;
}

.profile {
  right: 5px;
  width: 16px;
  height: 20px;
  background-color: #8d6e63;
  color: #fff;
  font-size: 10px;
}

.tray {
  flex: 1;
  display: flex;
  align-items: center;
  justify-content: flex-end;
  gap: 8px;
  padding-right: 20px;
  line-height: 16px;
}

.input-lang {
  margin: 0 11px 0 8px;
  text-align: center;
}

.clock {
  margin-left: 6px;
  text-align: right;
}
</style>
